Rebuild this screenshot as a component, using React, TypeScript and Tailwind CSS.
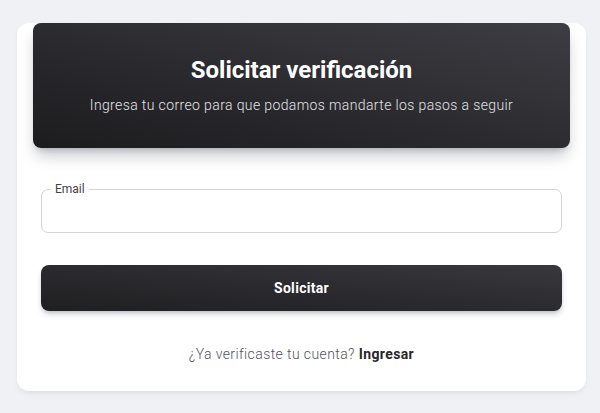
import React from 'react';

export default function App() {
  return (
    <div className="min-h-[413px] w-[600px] bg-[#eff1f5] pt-[47px] font-['Roboto',sans-serif] antialiased">
      <div className="ml-[17px] w-[569px] rounded-xl bg-white shadow-md shadow-gray-900/5">
        <div className="mx-4 -mt-6 flex h-[125px] flex-col items-center justify-center rounded-lg bg-gradient-to-tr from-[#1c1c1f] to-[#3d3d43] text-white shadow-lg shadow-gray-900/25">
          <h3 className="text-[24px] font-bold leading-8 tracking-normal">Solicitar verificación</h3>
          <p className="mt-[7px] text-[14px] font-light leading-6 tracking-[0.38px] text-[#e4e4e7]">
            Ingresa tu correo para que podamos mandarte los pasos a seguir
          </p>
        </div>

        <div className="px-6 pt-[41px]">
          <div className="relative">
            <input
              type="email"
              className="h-[44px] w-full rounded-[7px] border border-[#d4d4d8] bg-transparent px-3 text-sm text-gray-800 outline-none"
            />
            <label className="absolute -top-[8px] left-[10px] bg-white px-1 text-[12px] leading-4 text-[#3f3f46]">
              Email
            </label>
          </div>

          <button className="mt-[32px] flex h-[46px] w-full items-center justify-center rounded-lg bg-gradient-to-tr from-[#1f1f22] to-[#38383d] text-[14px] font-bold tracking-[0.3px] text-white shadow-md shadow-gray-900/20">
            Solicitar
          </button>

          <p className="pb-[25px] pt-[31px] text-center text-[14px] font-light leading-6 tracking-[0.4px] text-[#52525b]">
            ¿Ya verificaste tu cuenta? <span className="font-bold text-[#27272a]">Ingresar</span>
          </p>
        </div>
      </div>
    </div>
  );
}
